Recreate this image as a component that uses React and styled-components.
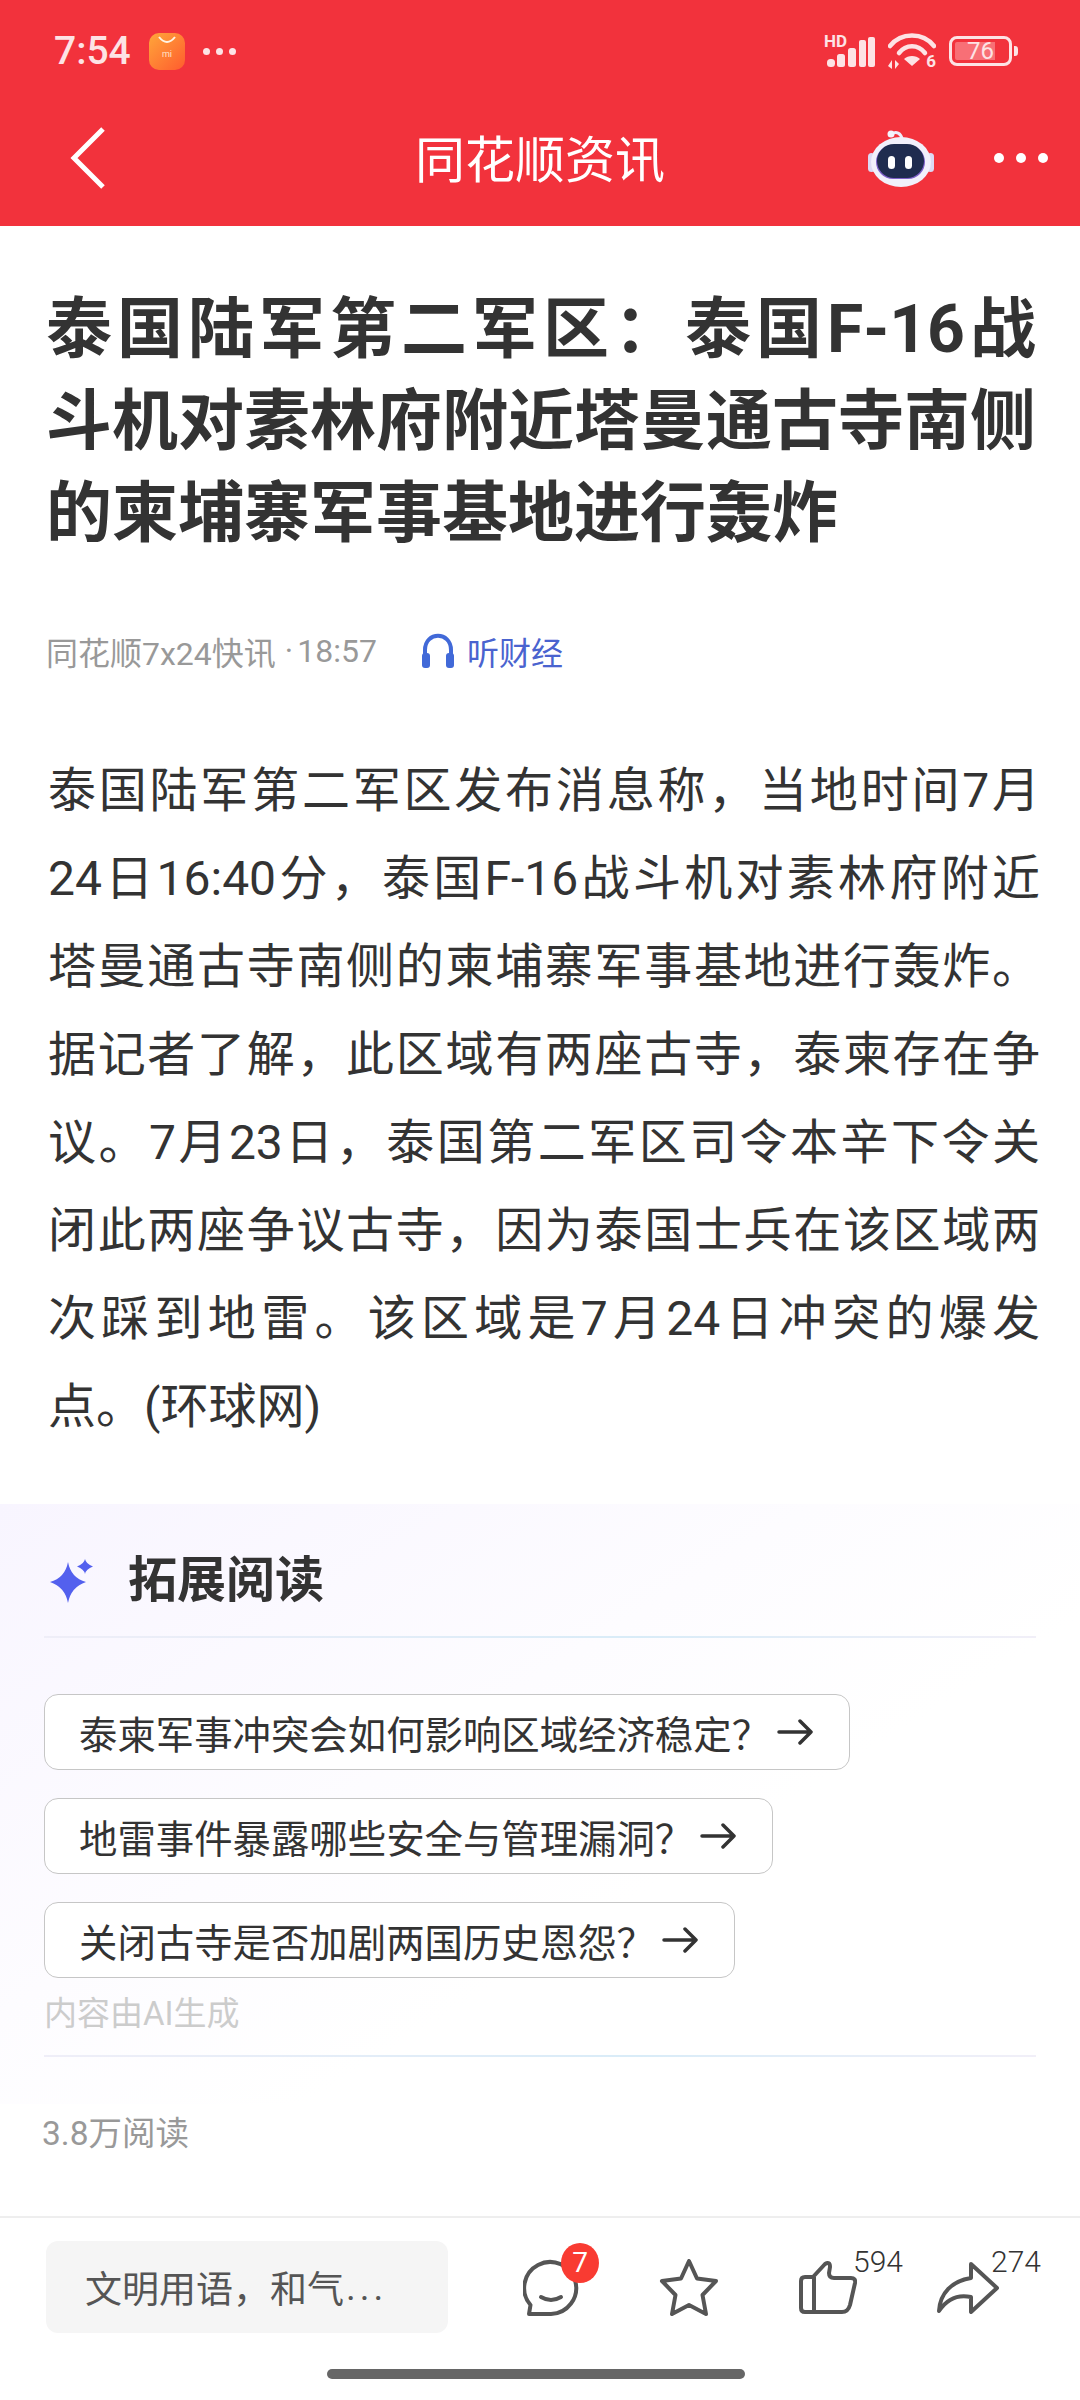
import React from 'react'
import styled, { createGlobalStyle } from 'styled-components'

const FONT = `Roboto, "Noto Sans CJK SC", sans-serif`

const GlobalStyle = createGlobalStyle`
  html, body {
    margin: 0;
    padding: 0;
    background: #fff;
  }
  * {
    box-sizing: border-box;
  }
`

const Page = styled.div`
  width: 1080px;
  height: 2400px;
  overflow: hidden;
  background: #fff;
  font-family: ${FONT};
  display: flex;
  flex-direction: column;
`

const Header = styled.header`
  height: 226px;
  background: #f2323c;
  color: #fff;
`

const StatusBar = styled.div`
  height: 102px;
  padding: 0 62px 0 54px;
  display: flex;
  align-items: center;
  justify-content: space-between;
`

const StatusGroup = styled.div`
  display: flex;
  align-items: center;
  gap: ${props => props.$gap}px;
`

const Time = styled.span`
  font-size: 39px;
  font-weight: 500;
  color: #fde3e5;
  width: 76px;
  white-space: nowrap;
`

const MiIcon = styled.div`
  width: 36px;
  height: 37px;
  margin-left: 19px;
  border-radius: 10px;
  background: linear-gradient(135deg, #ffa63a, #ff5c2e);
  display: flex;
  flex-direction: column;
  align-items: center;
`

const MiLabel = styled.span`
  font-size: 9px;
  line-height: 9px;
  margin-top: 4px;
  color: #ffe2c8;
`

const StatusDots = styled.div`
  display: flex;
  gap: 6px;
  margin-left: 18px;
`

const StatusDot = styled.i`
  width: 7px;
  height: 7px;
  border-radius: 50%;
  background: #fde3e5;
`

const Signal = styled.div`
  position: relative;
  width: 48px;
  height: 30px;
  margin-top: 2px;
`

const HdLabel = styled.span`
  position: absolute;
  left: -3px;
  top: -3px;
  font-size: 17px;
  line-height: 15px;
  font-weight: 700;
  color: #fde3e5;
`

const Wifi = styled.div`
  position: relative;
  width: 48px;
  height: 36px;
`

const WifiSix = styled.span`
  position: absolute;
  right: 0;
  bottom: -1px;
  font-size: 17px;
  line-height: 17px;
  font-weight: 700;
  color: #fde3e5;
`

const Battery = styled.div`
  width: 63px;
  height: 30px;
  border: 3px solid #fde3e5;
  border-radius: 8px;
  background: linear-gradient(90deg, #f86f76 0, #f86f76 ${props => props.$level}%, transparent ${props => props.$level}%);
  background-clip: content-box;
  padding: 3px;
  display: flex;
  align-items: center;
  justify-content: center;
  font-size: 24px;
  line-height: 24px;
  color: #fde3e5;
`

const BatteryWrap = styled.div`
  display: flex;
  align-items: center;
  gap: 2px;
`

const BatteryNub = styled.i`
  width: 4px;
  height: 10px;
  border-radius: 0 3px 3px 0;
  background: #fde3e5;
`

const NavBar = styled.nav`
  height: 112px;
  padding: 0 32px 0 70px;
  display: flex;
  align-items: center;
  justify-content: space-between;
  position: relative;
`

const NavTitle = styled.h1`
  position: absolute;
  left: 0;
  right: 0;
  top: 29px;
  margin: 0;
  text-align: center;
  font-size: 50px;
  line-height: 60px;
  font-weight: 400;
  color: #fff;
`

const NavRight = styled.div`
  display: flex;
  align-items: center;
  gap: 60px;
`

const MoreDots = styled.div`
  display: flex;
  gap: 12px;
`

const MoreDot = styled.i`
  width: 10px;
  height: 10px;
  border-radius: 50%;
  background: #fff;
`

const Article = styled.article`
  padding: 58px 44px 0 46px;
`

const Title = styled.h2`
  margin: 0;
  font-size: 66px;
  line-height: 92px;
  font-weight: 700;
  color: #333;
`

const Line = styled.span`
  display: block;
  white-space: nowrap;
  text-align: justify;
  text-align-last: ${props => props.$last ? 'left' : 'justify'};
`

const Meta = styled.div`
  margin-top: 71px;
  height: 40px;
  display: flex;
  align-items: center;
  font-size: 32px;
  color: #999;
  white-space: pre;
`

const MetaDot = styled.span`
  margin: 0 4px 0 9px;
`

const Listen = styled.span`
  margin-left: 44px;
  display: flex;
  align-items: center;
  gap: 12px;
  color: #4a63cf;
`

const Body = styled.p`
  margin: 76px -4px 0 2px;
  font-size: 48px;
  line-height: 88px;
  font-weight: 400;
  color: #333;
`

const Extended = styled.section`
  margin-top: 53px;
  padding: 47px 44px 0;
  height: 712px;
  background: linear-gradient(148deg, #f8f5ff 0, #fdfcff 40%, #fff 62%) no-repeat;
  background-size: 100% 600px;
`

const ExtendedHead = styled.div`
  height: 60px;
  display: flex;
  align-items: center;
  gap: 34px;
  padding-left: 6px;
`

const ExtendedTitle = styled.h3`
  margin: 0;
  font-size: 49px;
  line-height: 60px;
  font-weight: 700;
  color: #333;
`

const Divider = styled.div`
  height: 2px;
  margin-top: ${props => props.$top}px;
  background: linear-gradient(90deg, #efeef8, #d9ecf8 60%, #f1eff8);
`

const Chips = styled.div`
  margin-top: 56px;
  display: flex;
  flex-direction: column;
  align-items: flex-start;
  gap: 28px;
`

const Chip = styled.button`
  height: 76px;
  padding: 0 36px 0 34px;
  display: flex;
  align-items: center;
  gap: 7px;
  background: #fff;
  border: 1.5px solid #c6c6c6;
  border-radius: 14px;
  font-family: ${FONT};
  font-size: 38.4px;
  color: #333;
  white-space: nowrap;
`

const AiNote = styled.div`
  margin-top: 16px;
  font-size: 33px;
  line-height: 40px;
  color: #ccc;
`

const Reads = styled.div`
  margin: 57px 0 0 -2px;
  font-size: 33.5px;
  line-height: 40px;
  color: #999;
`

const Footer = styled.footer`
  border-top: 2px solid #eee;
  margin-top: auto;
  padding-top: 23px;
  height: 184px;
`

const FooterRow = styled.div`
  display: flex;
  align-items: center;
  padding-left: 46px;
`

const CommentInput = styled.div`
  width: 402px;
  height: 92px;
  padding-left: 39px;
  display: flex;
  align-items: center;
  border-radius: 12px;
  background: #f5f5f5;
  font-size: 37px;
  color: #555;
`

const InputDots = styled.span`
  letter-spacing: 4px;
  margin-left: 2px;
`

const Actions = styled.div`
  margin-left: 75px;
  display: flex;
  align-items: center;
  gap: 80px;
`

const Action = styled.div`
  position: relative;
  display: flex;
`

const Badge = styled.span`
  position: absolute;
  left: 38px;
  top: -16px;
  width: 38px;
  height: 40px;
  border-radius: 50%;
  background: #f93b32;
  color: #fff;
  font-size: 28px;
  line-height: 40px;
  text-align: center;
`

const Count = styled.span`
  position: absolute;
  left: ${props => props.$left}px;
  top: -14px;
  font-size: 30px;
  line-height: 30px;
  font-weight: 300;
  color: #333;
`

const HomeBar = styled.div`
  width: 418px;
  height: 10px;
  margin: 36px 0 0 327px;
  border-radius: 5px;
  background: #666;
`

const titleLines = [
  '泰国陆军第二军区：泰国F-16战',
  '斗机对素林府附近塔曼通古寺南侧',
  '的柬埔寨军事基地进行轰炸'
]

const bodyLines = [
  '泰国陆军第二军区发布消息称，当地时间7月',
  '24日16:40分，泰国F-16战斗机对素林府附近',
  '塔曼通古寺南侧的柬埔寨军事基地进行轰炸。',
  '据记者了解，此区域有两座古寺，泰柬存在争',
  '议。7月23日，泰国第二军区司令本辛下令关',
  '闭此两座争议古寺，因为泰国士兵在该区域两',
  '次踩到地雷。该区域是7月24日冲突的爆发',
  '点。(环球网)'
]

const questions = [
  '泰柬军事冲突会如何影响区域经济稳定？',
  '地雷事件暴露哪些安全与管理漏洞？',
  '关闭古寺是否加剧两国历史恩怨？'
]

function ArrowIcon() {
  return (
    <svg width="36" height="26" viewBox="0 0 36 26" fill="none" stroke="#333" strokeWidth="3.5" strokeLinecap="round" strokeLinejoin="round">
      <path d="M2 13H34M23 2L34 13L23 24" />
    </svg>
  )
}

function Sparkle() {
  return (
    <svg width="44" height="45" viewBox="0 0 44 45" fill="#5360ee">
      <path d="M18 3Q21 19 36 23Q21 28 18 44Q15 28 0 23Q15 19 18 3Z" />
      <path d="M35 0Q36 5 43 7.5Q36 10 35 15Q34 10 27 7.5Q34 5 35 0Z" />
    </svg>
  )
}

function RobotIcon() {
  return (
    <svg width="66" height="60" viewBox="0 0 66 60">
      <path d="M24 6C28 3 33 5 34 11" fill="none" stroke="#eeecfa" strokeWidth="3" strokeLinecap="round" />
      <circle cx="23" cy="6" r="3.5" fill="#f4f3fc" />
      <rect x="0" y="25" width="7" height="19" rx="3.5" fill="#dcd9f4" />
      <rect x="59" y="25" width="7" height="19" rx="3.5" fill="#dcd9f4" />
      <ellipse cx="33" cy="34" rx="30" ry="25" fill="#f1f0fb" />
      <rect x="8" y="17" width="49" height="34" rx="17" fill="#7d5fc8" />
      <rect x="9" y="16" width="47" height="34" rx="17" fill="#1f2c4f" />
      <rect x="20" y="28" width="7" height="13" rx="3.5" fill="#fff" />
      <rect x="37" y="28" width="7" height="13" rx="3.5" fill="#fff" />
    </svg>
  )
}

function SignalBars() {
  return (
    <svg width="48" height="30" viewBox="0 0 48 30" fill="#fde3e5">
      <rect x="0" y="22" width="8" height="8" rx="3.5" />
      <rect x="10" y="17" width="8" height="13" rx="2.5" />
      <rect x="21" y="11" width="8" height="19" rx="2.5" />
      <rect x="32" y="3" width="7" height="27" rx="2" />
      <rect x="41" y="0" width="7" height="30" rx="2" />
    </svg>
  )
}

function WifiArcs() {
  return (
    <svg width="48" height="36" viewBox="0 0 48 36" fill="none" stroke="#fde3e5" strokeWidth="4.5" strokeLinecap="round">
      <path d="M2 13C13 -1 35 -1 46 13" />
      <path d="M11 20C18 11 30 11 37 20" />
      <path d="M16 26C20 22 28 22 32 26L24 33Z" fill="#fde3e5" stroke="none" />
      <path d="M0 33L4 27V36ZM7 27V36L11 31Z" fill="#fde3e5" stroke="none" />
    </svg>
  )
}

function CommentIcon() {
  return (
    <svg width="56" height="57" viewBox="0 0 56 57" fill="none" stroke="#555" strokeWidth="4" strokeLinecap="round" strokeLinejoin="round">
      <path d="M6 55L7.5 46A26 26 0 1 1 28 55Z" />
      <path d="M18 38Q28 44 38 38" />
    </svg>
  )
}

function StarIcon() {
  return (
    <svg width="60" height="57" viewBox="0 0 60 57" fill="none" stroke="#555" strokeWidth="4" strokeLinejoin="round">
      <path d="M30 2L38 19.5L57 22L43.5 36L47 55L30 46L13 55L16.5 36L3 22L22 19.5Z" />
    </svg>
  )
}

function ThumbIcon() {
  return (
    <svg width="58" height="53" viewBox="0 0 58 53" fill="none" stroke="#555" strokeWidth="4" strokeLinejoin="round">
      <path d="M14 16L26 3Q31 0 31 6L30 12Q30 17 35 17L52 17Q57 17 56 22L51 44Q49 51 43 51L6 51Q2 51 2 47L2 20Q2 16 6 16ZM15 16V51" />
    </svg>
  )
}

function ShareIcon() {
  return (
    <svg width="62" height="53" viewBox="0 0 62 53" fill="none" stroke="#555" strokeWidth="4" strokeLinejoin="round">
      <path d="M34 3L60 27L34 51L34 36C20 33 10 38 2 50C3 32 15 20 34 17Z" />
    </svg>
  )
}

export default function App() {
  return (
    <Page>
      <GlobalStyle />
      <Header>
        <StatusBar>
          <StatusGroup $gap={0}>
            <Time>7:54</Time>
            <MiIcon>
              <svg width="20" height="13" viewBox="0 0 20 13" fill="none" stroke="#fff4e4" strokeWidth="2">
                <path d="M2 4Q10 14 18 4" />
              </svg>
              <MiLabel>mi</MiLabel>
            </MiIcon>
            <StatusDots>
              <StatusDot />
              <StatusDot />
              <StatusDot />
            </StatusDots>
          </StatusGroup>
          <StatusGroup $gap={13}>
            <Signal>
              <HdLabel>HD</HdLabel>
              <SignalBars />
            </Signal>
            <Wifi>
              <WifiArcs />
              <WifiSix>6</WifiSix>
            </Wifi>
            <BatteryWrap>
              <Battery $level={76}>76</Battery>
              <BatteryNub />
            </BatteryWrap>
          </StatusGroup>
        </StatusBar>
        <NavBar>
          <svg width="36" height="64" viewBox="0 0 36 64" fill="none" stroke="#fff" strokeWidth="5">
            <path d="M33 3L4 32L33 61" />
          </svg>
          <NavTitle>同花顺资讯</NavTitle>
          <NavRight>
            <RobotIcon />
            <MoreDots>
              <MoreDot />
              <MoreDot />
              <MoreDot />
            </MoreDots>
          </NavRight>
        </NavBar>
      </Header>

      <Article>
        <Title>
          {titleLines.map((text, i) => (
            <Line key={text} $last={i === titleLines.length - 1}>{text}</Line>
          ))}
        </Title>
        <Meta>
          同花顺7x24快讯<MetaDot>·</MetaDot>18:57
          <Listen>
            <svg width="34" height="36" viewBox="0 0 34 36" fill="none">
              <path d="M4 24V17C4 -2 30 -2 30 17V24" stroke="#4169d8" strokeWidth="4" />
              <rect x="1" y="20" width="8" height="15" rx="3" fill="#4169d8" />
              <rect x="25" y="20" width="8" height="15" rx="3" fill="#4169d8" />
            </svg>
            听财经
          </Listen>
        </Meta>
        <Body>
          {bodyLines.map((text, i) => (
            <Line key={text} $last={i === bodyLines.length - 1}>{text}</Line>
          ))}
        </Body>
      </Article>

      <Extended>
        <ExtendedHead>
          <Sparkle />
          <ExtendedTitle>拓展阅读</ExtendedTitle>
        </ExtendedHead>
        <Divider $top={25} />
        <Chips>
          {questions.map(q => (
            <Chip key={q}>
              {q}
              <ArrowIcon />
            </Chip>
          ))}
        </Chips>
        <AiNote>内容由AI生成</AiNote>
        <Divider $top={21} />
        <Reads>3.8万阅读</Reads>
      </Extended>

      <Footer>
        <FooterRow>
          <CommentInput>文明用语，和气<InputDots>...</InputDots></CommentInput>
          <Actions>
            <Action>
              <CommentIcon />
              <Badge>7</Badge>
            </Action>
            <Action>
              <StarIcon />
            </Action>
            <Action>
              <ThumbIcon />
              <Count $left={54}>594</Count>
            </Action>
            <Action>
              <ShareIcon />
              <Count $left={54}>274</Count>
            </Action>
          </Actions>
        </FooterRow>
        <HomeBar />
      </Footer>
    </Page>
  )
}
